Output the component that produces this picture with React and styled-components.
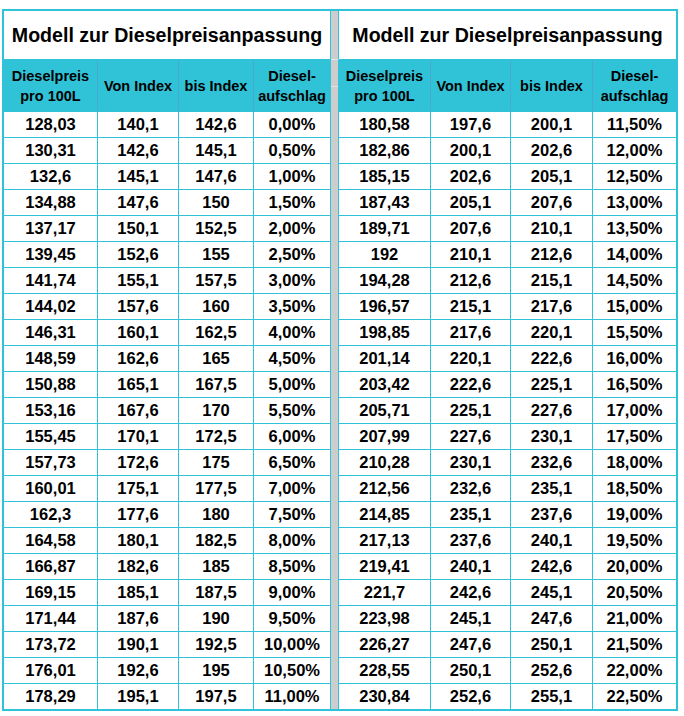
import React from 'react';
import styled, { createGlobalStyle } from 'styled-components';

const CYAN = '#30c3d7';
const HEAD_LINE = '#4aa8d4';
const GAP_GREY = '#cdcdcd';

const GlobalStyle = createGlobalStyle`
  html, body {
    margin: 0;
    padding: 0;
    background: #fff;
  }
  body {
    padding: 9px 0 0 2px;
    font-family: "Liberation Sans", Arial, sans-serif;
    color: #000;
  }
`;

const Board = styled.div`
  display: grid;
  grid-template-columns: 94px 81px 75px 77px 8px 92px 80px 82px 83px;
  grid-template-rows: 49px 52px repeat(22, 26px) 25px;
  width: max-content;
  border: 2px solid ${CYAN};
  background: #fff;
`;

const Title = styled.div`
  grid-column: span 4;
  box-sizing: border-box;
  display: flex;
  align-items: center;
  justify-content: center;
  font-size: 19.6px;
  font-weight: bold;
  border-bottom: 1px solid ${CYAN};
  border-right: ${(p) => (p.$last ? 'none' : `1px solid ${CYAN}`)};
`;

const Gap = styled.div`
  box-sizing: border-box;
  background: ${GAP_GREY};
  border-right: 1px solid ${CYAN};
  border-bottom: ${(p) => (p.$lined ? '1px solid #e4e4e4' : 'none')};
  display: flex;
  flex-direction: column;
`;

const GapHalf = styled.div`
  flex: 1;
  & + & {
    border-top: 1px solid #e4e4e4;
  }
`;

const HeadCell = styled.div`
  box-sizing: border-box;
  display: flex;
  align-items: center;
  justify-content: center;
  text-align: center;
  background: ${CYAN};
  font-size: 14.5px;
  font-weight: bold;
  line-height: 20px;
  border-bottom: 1px solid ${CYAN};
  border-right: ${(p) =>
    p.$last ? 'none' : `1px solid ${p.$edge ? CYAN : HEAD_LINE}`};
`;

const Cell = styled.div`
  box-sizing: border-box;
  display: flex;
  align-items: center;
  justify-content: center;
  font-size: 16.5px;
  font-weight: bold;
  border-bottom: ${(p) => (p.$bottom ? 'none' : `1px solid ${CYAN}`)};
  border-right: ${(p) => (p.$last ? 'none' : `1px solid ${CYAN}`)};
`;

const LEFT = [
  '128,03 140,1 142,6 0,00%',
  '130,31 142,6 145,1 0,50%',
  '132,6 145,1 147,6 1,00%',
  '134,88 147,6 150 1,50%',
  '137,17 150,1 152,5 2,00%',
  '139,45 152,6 155 2,50%',
  '141,74 155,1 157,5 3,00%',
  '144,02 157,6 160 3,50%',
  '146,31 160,1 162,5 4,00%',
  '148,59 162,6 165 4,50%',
  '150,88 165,1 167,5 5,00%',
  '153,16 167,6 170 5,50%',
  '155,45 170,1 172,5 6,00%',
  '157,73 172,6 175 6,50%',
  '160,01 175,1 177,5 7,00%',
  '162,3 177,6 180 7,50%',
  '164,58 180,1 182,5 8,00%',
  '166,87 182,6 185 8,50%',
  '169,15 185,1 187,5 9,00%',
  '171,44 187,6 190 9,50%',
  '173,72 190,1 192,5 10,00%',
  '176,01 192,6 195 10,50%',
  '178,29 195,1 197,5 11,00%',
];

const RIGHT = [
  '180,58 197,6 200,1 11,50%',
  '182,86 200,1 202,6 12,00%',
  '185,15 202,6 205,1 12,50%',
  '187,43 205,1 207,6 13,00%',
  '189,71 207,6 210,1 13,50%',
  '192 210,1 212,6 14,00%',
  '194,28 212,6 215,1 14,50%',
  '196,57 215,1 217,6 15,00%',
  '198,85 217,6 220,1 15,50%',
  '201,14 220,1 222,6 16,00%',
  '203,42 222,6 225,1 16,50%',
  '205,71 225,1 227,6 17,00%',
  '207,99 227,6 230,1 17,50%',
  '210,28 230,1 232,6 18,00%',
  '212,56 232,6 235,1 18,50%',
  '214,85 235,1 237,6 19,00%',
  '217,13 237,6 240,1 19,50%',
  '219,41 240,1 242,6 20,00%',
  '221,7 242,6 245,1 20,50%',
  '223,98 245,1 247,6 21,00%',
  '226,27 247,6 250,1 21,50%',
  '228,55 250,1 252,6 22,00%',
  '230,84 252,6 255,1 22,50%',
];

const HEADERS = [
  ['Dieselpreis', 'pro 100L'],
  ['Von Index'],
  ['bis Index'],
  ['Diesel-', 'aufschlag'],
];

function HeaderGroup({ last }) {
  return HEADERS.map((lines, i) => (
    <HeadCell
      key={i}
      $edge={i === 3 && !last}
      $last={i === 3 && last}
    >
      <span>
        {lines.map((l, j) => (
          <React.Fragment key={j}>
            {j > 0 && <br />}
            {l}
          </React.Fragment>
        ))}
      </span>
    </HeadCell>
  ));
}

function DataGroup({ row, last, bottom }) {
  return row.split(' ').map((v, i) => (
    <Cell key={i} $last={last && i === 3} $bottom={bottom}>
      {v}
    </Cell>
  ));
}

export default function App() {
  return (
    <>
      <GlobalStyle />
      <Board>
        <Title>Modell zur Dieselpreisanpassung</Title>
        <Gap $lined />
        <Title $last>Modell zur Dieselpreisanpassung</Title>

        <HeaderGroup />
        <Gap>
          <GapHalf />
          <GapHalf />
        </Gap>
        <HeaderGroup last />

        {LEFT.map((row, i) => {
          const bottom = i === LEFT.length - 1;
          return (
            <React.Fragment key={i}>
              <DataGroup row={row} bottom={bottom} />
              <Gap />
              <DataGroup row={RIGHT[i]} last bottom={bottom} />
            </React.Fragment>
          );
        })}
      </Board>
    </>
  );
}
